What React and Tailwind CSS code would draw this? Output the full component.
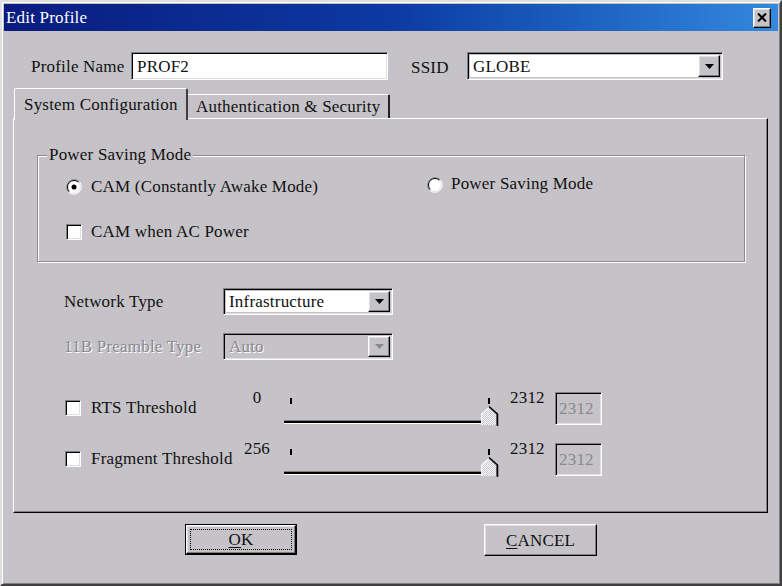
import React from 'react';

const raised =
  'border border-t-white border-l-white border-r-black border-b-black shadow-[inset_-1px_-1px_0_#808080,inset_1px_1px_0_#dfdfdf]';
const sunken =
  'border border-t-[#808080] border-l-[#808080] border-r-white border-b-white shadow-[inset_1px_1px_0_#000,inset_-1px_-1px_0_#dfdfdf]';
const grayText = 'text-[#8a898e] [text-shadow:1px_1px_0_#fff]';

function DownArrow({ disabled }) {
  return (
    <svg width="9" height="5" viewBox="0 0 9 5">
      <path d="M0 0h9L4.5 5z" fill={disabled ? '#8a898e' : '#000'} />
    </svg>
  );
}

function Combo({ value, className, disabled }) {
  return (
    <div className={`${sunken} ${className} flex p-[2px]`}>
      <div
        className={`flex-1 flex items-center pl-[3px] leading-none ${
          disabled ? `bg-[#c5c3c8] ${grayText}` : 'bg-white'
        }`}
      >
        {value}
      </div>
      <div className={`${raised} w-[22px] flex items-center justify-center`}>
        <DownArrow disabled={disabled} />
      </div>
    </div>
  );
}

function Checkbox() {
  return <div className={`${sunken} w-[16px] h-[16px] bg-white shrink-0`} />;
}

function Radio({ checked }) {
  return (
    <svg width="16" height="16" viewBox="0 0 16 16" className="shrink-0">
      <circle cx="8" cy="8" r="7" fill="#fff" />
      <path d="M2.7 13.3A7.5 7.5 0 0 1 13.3 2.7" stroke="#808080" fill="none" />
      <path d="M3.4 12.6A6.5 6.5 0 0 1 12.6 3.4" stroke="#000" fill="none" />
      <path d="M2.7 13.3A7.5 7.5 0 0 0 13.3 2.7" stroke="#fff" fill="none" />
      <path d="M3.4 12.6A6.5 6.5 0 0 0 12.6 3.4" stroke="#dfdfdf" fill="none" />
      {checked && <circle cx="8" cy="8" r="2.5" fill="#000" />}
    </svg>
  );
}

function Slider() {
  return (
    <svg width="216" height="34" viewBox="0 0 216 34" className="shrink-0">
      <defs>
        <pattern id="dither" width="2" height="2" patternUnits="userSpaceOnUse">
          <rect width="2" height="2" fill="#fff" />
          <rect width="1" height="1" fill="#c5c3c8" />
          <rect x="1" y="1" width="1" height="1" fill="#c5c3c8" />
        </pattern>
      </defs>
      <rect x="7" y="6" width="2" height="6" fill="#000" />
      <rect x="1" y="28" width="197" height="1" fill="#808080" />
      <rect x="1" y="29" width="197" height="2" fill="#000" />
      <rect x="1" y="31" width="197" height="1" fill="#fff" />
      <rect x="205" y="6" width="2" height="6" fill="#000" />
      <path d="M198 33V22l8-7 8 7v11z" fill="url(#dither)" />
      <path d="M198.5 33V22l7.5-6.5" stroke="#fff" fill="none" />
      <path d="M206 15.5l7.5 6.5V33" stroke="#808080" fill="none" />
      <path d="M206 14.5l8.5 7.5V34" stroke="#000" strokeWidth="1.5" fill="none" />
    </svg>
  );
}

function ThresholdRow({ label, min, className }) {
  return (
    <div className={`flex items-start pl-[51px] h-[34px] ${className}`}>
      <div className="w-[172px] flex items-center gap-[10px] pt-[8px] whitespace-nowrap">
        <Checkbox />
        <span className="leading-[16px]">{label}</span>
      </div>
      <div className="w-[40px] text-center leading-[14px] -mt-[1px]">{min}</div>
      <div className="ml-[6px]">
        <Slider />
      </div>
      <div className="ml-[11px] w-[45px] leading-[14px] -mt-[1px]">2312</div>
      <div className={`${sunken} w-[47px] h-[33px] flex items-center pl-[3px] text-[#8a898e]`}>
        2312
      </div>
    </div>
  );
}

export default function App() {
  return (
    <div className="w-[782px] h-[586px] bg-[#c5c3c8] text-[#111] text-[17px] tracking-[0.2px] [font-family:'Liberation_Serif','Times_New_Roman',serif] border-2 border-t-[#dfdfdf] border-l-[#dfdfdf] border-r-[#404040] border-b-[#404040] shadow-[inset_1px_1px_0_#fff,inset_-1px_-1px_0_#808080] p-[2px] flex flex-col overflow-hidden">
      {/* title bar */}
      <div className="h-[27px] bg-linear-to-r from-[#0a1b7e] via-[#0c3aa2] to-[#3488de] flex items-center justify-between pl-[2px] pr-[7px]">
        <span className="text-white leading-none">Edit Profile</span>
        <div className={`${raised} bg-[#c5c3c8] w-[18px] h-[20px] flex items-center justify-center`}>
          <svg width="10" height="9" viewBox="0 0 10 9">
            <path d="M1 0.5l8 8M9 0.5l-8 8" stroke="#000" strokeWidth="2" />
          </svg>
        </div>
      </div>

      {/* profile name / ssid */}
      <div className="mt-[21px] h-[28px] flex items-center pl-[27px]">
        <span className="w-[100px] leading-none">Profile Name</span>
        <div className={`${sunken} w-[257px] h-full bg-white flex items-center pl-[5px] leading-none`}>
          PROF2
        </div>
        <span className="ml-[23px] w-[56px] leading-none mt-[3px]">SSID</span>
        <Combo value="GLOBE" className="w-[256px] h-full" />
      </div>

      {/* tabs */}
      <div className="mt-[8px] h-[30px] flex items-end ml-[10px]">
        <div className="relative z-10 -mb-[2px] w-[174px] h-[32px] bg-[#c5c3c8] border-t border-l border-t-white border-l-white border-r-2 border-r-[#404040] rounded-t-[2px] pl-[9px] pt-[7px] leading-[17px] whitespace-nowrap">
          System Configuration
        </div>
        <div className="w-[202px] h-[24px] border-t border-t-white border-r-2 border-r-[#202020] rounded-tr-[2px] pl-[8px] flex items-center leading-none whitespace-nowrap">
          Authentication &amp; Security
        </div>
      </div>

      {/* tab panel */}
      <div className="ml-[9px] w-[755px] h-[395px] border border-t-white border-l-white border-r-black border-b-black shadow-[inset_-1px_-1px_0_#808080] flex flex-col">
        {/* group box */}
        <div className="relative mt-[36px] ml-[23px] w-[708px] h-[107px] border border-[#8a898e] shadow-[1px_1px_0_#fff,inset_1px_1px_0_#fff]">
          <span className="absolute left-[9px] -top-[10px] px-[2px] bg-[#c5c3c8] leading-[18px]">
            Power Saving Mode
          </span>
          <div className="flex items-start pl-[28px] pt-[23px]">
            <div className="w-[361px] flex items-center gap-[9px]">
              <Radio checked />
              <span className="leading-[16px]">CAM (Constantly Awake Mode)</span>
            </div>
            <div className="flex items-center gap-[8px] -mt-[2px]">
              <Radio />
              <span className="leading-[16px] -mt-[2px]">Power Saving Mode</span>
            </div>
          </div>
          <div className="flex items-center gap-[9px] pl-[28px] mt-[29px]">
            <Checkbox />
            <span className="leading-[16px]">CAM when AC Power</span>
          </div>
        </div>

        {/* network type */}
        <div className="mt-[26px] h-[27px] flex items-center pl-[50px]">
          <span className="w-[159px] leading-none">Network Type</span>
          <Combo value="Infrastructure" className="w-[170px] h-full" />
        </div>
        <div className="mt-[18px] h-[27px] flex items-center pl-[50px]">
          <span className={`w-[159px] leading-none ${grayText}`}>11B Preamble Type</span>
          <Combo value="Auto" className="w-[170px] h-full" disabled />
        </div>

        <ThresholdRow label="RTS Threshold" min="0" className="mt-[32px]" />
        <ThresholdRow label="Fragment Threshold" min="256" className="mt-[17px]" />
      </div>

      {/* buttons */}
      <div className="mt-[11px] flex items-start pl-[181px]">
        <div className="w-[112px] h-[31px] border border-black flex">
          <div className={`${raised} flex-1 p-[3px]`}>
            <div className="w-full h-full border border-dotted border-black flex items-center justify-center leading-none">
              <span>
                <u className="underline-offset-2">O</u>K
              </span>
            </div>
          </div>
        </div>
        <div className={`${raised} ml-[187px] w-[113px] h-[32px] flex items-center justify-center leading-none`}>
          <span>
            <u className="underline-offset-2">C</u>ANCEL
          </span>
        </div>
      </div>
    </div>
  );
}
